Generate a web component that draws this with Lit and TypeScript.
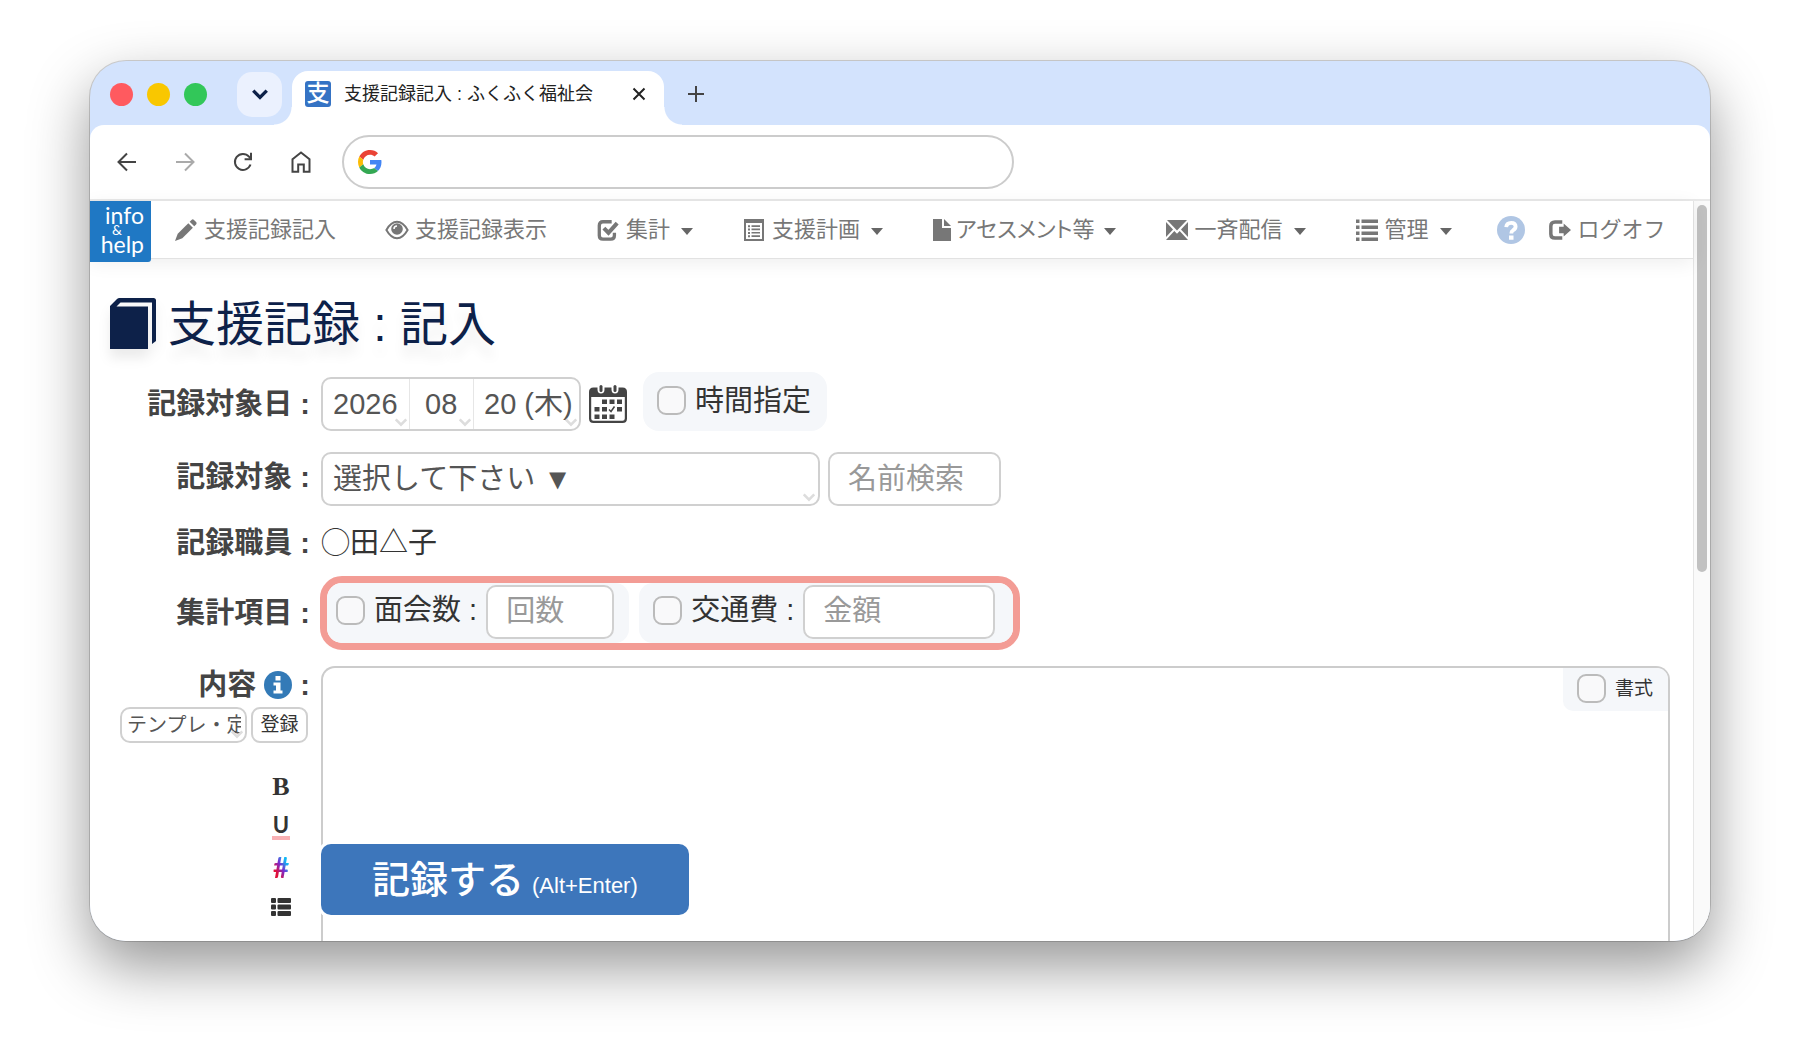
import { LitElement, html, css, svg, nothing } from "lit";
import { customElement, property } from "lit/decorators.js";

const icons: Record<string, { box: string; art: unknown }> = {
  back: { box: "0 0 20 20", art: svg`<path class="line" d="M19 10H2M10 1.500L1.500 10L10 18.500"/>` },
  forward: { box: "0 0 20 20", art: svg`<path class="line" d="M1 10H18M10 1.500L18.500 10L10 18.500"/>` },
  reload: {
    box: "0 0 20 20",
    art: svg`<path class="line" d="M17.500 12.500A8 8 0 1 1 16 4.700L18 7"/><path d="M19 .8V8.200H11.600V6.200H17V.8Z"/>`,
  },
  home: { box: "0 0 20 22", art: svg`<path class="line" d="M1.500 8.200L10 1.500L18.500 8.200V20.700H12.800V13.500H7.200V20.700H1.500Z"/>` },
  chevron: { box: "0 0 16 16", art: svg`<path class="heavy" d="M2 5L8 11L14 5"/>` },
  close: { box: "0 0 16 16", art: svg`<path class="line" d="M2.500 2.500L13.500 13.500M13.500 2.500L2.500 13.500"/>` },
  plus: { box: "0 0 16 16", art: svg`<path class="line" d="M8 0V16M0 8H16"/>` },
  google: {
    box: "0 0 48 48",
    art: svg`<path fill="#EA4335" d="M24 9.500c3.540 0 6.710 1.220 9.210 3.600l6.850-6.850C35.900 2.380 30.470 0 24 0 14.620 0 6.510 5.380 2.560 13.220l7.980 6.190C12.430 13.720 17.740 9.500 24 9.500z"/>
      <path fill="#4285F4" d="M46.980 24.550c0-1.570-.15-3.090-.38-4.550H24v9.020h12.940c-.58 2.960-2.260 5.480-4.780 7.180l7.730 6c4.510-4.180 7.090-10.360 7.090-17.650z"/>
      <path fill="#FBBC05" d="M10.530 28.590c-.48-1.450-.76-2.990-.76-4.590s.27-3.140.76-4.590l-7.980-6.190C.92 16.460 0 20.120 0 24c0 3.880.92 7.540 2.560 10.780l7.970-6.190z"/>
      <path fill="#34A853" d="M24 48c6.480 0 11.930-2.130 15.890-5.810l-7.730-6c-2.150 1.450-4.920 2.300-8.160 2.300-6.260 0-11.570-4.220-13.470-9.910l-7.980 6.190C6.510 42.620 14.620 48 24 48z"/>`,
  },
  pencil: {
    box: "0 0 24 24",
    art: svg`<path d="M0 24L3 16L14.500 4.500L19.500 9.500L8 21Z"/><path d="M16 3L18.300 .8Q19.500 -.2 20.700 1L23 3.300Q24.200 4.500 23.200 5.700L21 8Z"/>`,
  },
  eye: {
    box: "1 0 22 18",
    art: svg`<path class="line" d="M1.400 9Q6 .8 12 .8T22.600 9Q18 17.200 12 17.200T1.400 9Z"/><circle cx="12" cy="8" r="5.800"/><path d="M9 8A3 3 0 0 1 12 5" fill="none" stroke="#fff" stroke-width="1.500"/>`,
  },
  check: {
    box: "0 0 24 24",
    art: svg`<path d="M16 3H6.500Q2.500 3 2.500 7V18Q2.500 22 6.500 22H15Q19 22 19 18V15" fill="none" stroke="currentColor" stroke-width="3.600"/><path d="M7.500 10L12.500 15L22 4.500" fill="none" stroke="currentColor" stroke-width="4.400"/>`,
  },
  sheet: {
    box: "0 0 22 22",
    art: svg`<path fill-rule="evenodd" d="M1 0H21V22H1ZM3 4V20H19V4Z"/><path d="M5 6.300h2v2H5zM5 9.600h2v2H5zM5 12.900h2v2H5zM5 16.200h2v2H5zM8.500 6.300h8.500v1.700H8.500zM8.500 9.600h8.500v1.700H8.500zM8.500 12.900h8.500v1.700H8.500zM8.500 16.200h8.500v1.700H8.500z"/>`,
  },
  file: { box: "0 0 18 22", art: svg`<path d="M0 0H9V9H18V22H0Z"/><path d="M11 0L18 7H11Z"/>` },
  mail: {
    box: "0 0 22 20",
    art: svg`<path d="M1 0H21L11 10.500Z"/><path d="M0 2L7 9.500L0 17Z"/><path d="M22 2L15 9.500L22 17Z"/><path d="M0 20L8.300 11L11 13.700L13.700 11L22 20Z"/>`,
  },
  list: {
    box: "0 0 22 22",
    art: svg`<path d="M0 .5h3.500v3.500H0zM0 6.500h3.500v3.500H0zM0 12.500h3.500v3.500H0zM0 18.500h3.500v3.500H0z"/><path d="M5.500 .5H22v3.500H5.500zM5.500 6.500H22v3.500H5.500zM5.500 12.500H22v3.500H5.500zM5.500 18.500H22v3.500H5.500z"/>`,
  },
  logout: {
    box: "0 0 24 22",
    art: svg`<path d="M14.500 2.200H6.500Q2 2.200 2 6.700V15.300Q2 19.800 6.500 19.800H14.500" fill="none" stroke="currentColor" stroke-width="3.800"/><path d="M11 7.500H16V3.800L24 11L16 18.200V14.500H11Z"/>`,
  },
  question: {
    box: "0 0 28 28",
    art: svg`<circle cx="14" cy="14" r="14"/><path d="M9.200 11.200Q9.500 6.800 14.200 6.800Q18.600 6.800 18.600 10.600Q18.600 13 16 14.300Q14.300 15.300 14.300 17.500" fill="none" stroke="#fff" stroke-width="3.800"/><path fill="#fff" d="M12 19.500h4.500v4.200H12z"/>`,
  },
  info: {
    box: "0 0 28 28",
    art: svg`<circle cx="14" cy="14" r="14"/><path fill="#fff" d="M11.500 5h5v4.500h-5zM9.500 11.500h7v8h2v3h-9v-3h2.500v-5H9.500z"/>`,
  },
  book: {
    box: "0 0 46 51",
    art: svg`<path d="M0 51V8L7 1Q8 0 9.500 0H43.500Q46 0 46 2.500V43L42 46V4.500H10.500L6.500 8.500H38V51Z"/>`,
  },
  calendar: {
    box: "0 0 38 38",
    art: svg`<path fill-rule="evenodd" d="M4.500 2.500H8.500V4.500Q8.500 8.500 12 8.500T15.500 4.500V2.500H22.500V4.500Q22.500 8.500 26 8.500T29.500 4.500V2.500H33.500Q38 2.500 38 7V33.500Q38 38 33.500 38H4.500Q0 38 0 33.500V7Q0 2.500 4.500 2.500ZM2.200 12V33.500Q2.200 35.800 4.500 35.800H33.500Q35.800 35.800 35.800 33.500V12Z"/>
      <rect x="10.500" y="0" width="3" height="7" rx="1.500"/><rect x="24.500" y="0" width="3" height="7" rx="1.500"/>
      <path d="M13 14.500h5v4.500h-5zM20.500 14.500h5v4.500h-5zM28 14.500h5v4.500h-5zM5.500 22h5v4.500h-5zM13 22h5v4.500h-5zM28 22h5v4.500h-5zM5.500 29.500h5v4.500h-5zM13 29.500h5v4.500h-5zM20.500 29.500h5v4.500h-5z"/>
      <path d="M20 24.500L22 26.500L25.500 21.500" fill="none" stroke="currentColor" stroke-width="1.500"/>`,
  },
  bullets: {
    box: "0 0 20 18",
    art: svg`<rect x="0" y="0" width="5" height="5" rx="1"/><rect x="0" y="6.500" width="5" height="5" rx="1"/><rect x="0" y="13" width="5" height="5" rx="1"/><rect x="6.500" y="0" width="13.500" height="5" rx="1"/><rect x="6.500" y="6.500" width="13.500" height="5" rx="1"/><rect x="6.500" y="13" width="13.500" height="5" rx="1"/>`,
  },
};

@customElement("ui-icon")
export class UiIcon extends LitElement {
  @property() name = "plus";

  static styles = css`
    :host { display: inline-flex; flex: none; }
    svg { width: 100%; height: 100%; fill: currentColor; overflow: visible; }
    .line { fill: none; stroke: currentColor; stroke-width: 2; }
    .heavy { fill: none; stroke: currentColor; stroke-width: 3; }
  `;

  render() {
    const icon = icons[this.name];
    return html`<svg viewBox=${icon.box} aria-hidden="true">${icon.art}</svg>`;
  }
}

interface NavEntry { icon: string; text: string; menu?: boolean; tight?: boolean; }

const navEntries: NavEntry[] = [
  { icon: "pencil", text: "支援記録記入" },
  { icon: "eye", text: "支援記録表示" },
  { icon: "check", text: "集計", menu: true },
  { icon: "sheet", text: "支援計画", menu: true },
  { icon: "file", text: "アセスメント等", menu: true, tight: true },
  { icon: "mail", text: "一斉配信", menu: true },
  { icon: "list", text: "管理", menu: true },
];

@customElement("app-root")
export class AppRoot extends LitElement {
  static styles = css`
    * { box-sizing: border-box; }
    :host {
      display: flex;
      box-sizing: border-box;
      height: 100vh;
      padding: 61px 90px 119px;
      background: #fff;
      color: #333;
      font-family: "Liberation Sans", "Noto Sans CJK JP", sans-serif;
      font-size: 29px;
      line-height: 38px;
    }
    button, input, select, textarea { font: inherit; color: inherit; margin: 0; }
    button { border: 0; background: none; padding: 0; cursor: pointer; }
    a { color: inherit; text-decoration: none; }

    .window {
      flex: 1;
      min-width: 0;
      display: flex;
      flex-direction: column;
      overflow: hidden;
      border-radius: 36px;
      background: #d3e3fd;
      box-shadow: 0 0 0 1px rgba(0, 0, 0, 0.16), 0 25px 60px rgba(0, 0, 0, 0.42);
    }

    .tabs { flex: none; display: flex; align-items: center; height: 64px; padding: 2px 20px 0; }
    .lights { display: flex; gap: 14px; margin-right: 30px; }
    .light { width: 23px; height: 23px; border-radius: 50%; }
    .red { background: #ff5a5f; }
    .yellow { background: #f9c700; }
    .green { background: #32c759; }
    .tab-list {
      display: flex; align-items: center; justify-content: center;
      width: 45px; height: 45px; border-radius: 15px; background: #ebf1fe; color: #0d2149;
    }
    .tab-list ui-icon { width: 18px; height: 18px; }
    .tab {
      position: relative;
      align-self: flex-end;
      display: flex;
      align-items: center;
      width: 372px;
      height: 54px;
      margin-left: 10px;
      padding: 0 17px 8px 13px;
      border-radius: 16px 16px 0 0;
      background: #fff;
      color: #222;
    }
    .tab::before, .tab::after { content: ""; position: absolute; bottom: 0; width: 18px; height: 18px; }
    .tab::before { right: 100%; background: radial-gradient(circle at 0 0, transparent 17px, #fff 18px); }
    .tab::after { left: 100%; background: radial-gradient(circle at 100% 0, transparent 17px, #fff 18px); }
    .favicon {
      width: 26px; height: 26px; border-radius: 3px; background: #3573c4; color: #fff;
      font-size: 23px; line-height: 25px; font-weight: 500; text-align: center;
    }
    .tab-title { flex: 1; margin-left: 13px; font-size: 18px; line-height: 26px; white-space: nowrap; }
    .tab button, .new-tab { display: flex; }
    .tab ui-icon, .new-tab ui-icon { width: 16px; height: 16px; }
    .new-tab { margin-left: 24px; color: #444; }

    .toolbar {
      flex: none; display: flex; align-items: center; height: 74px; padding: 0 26px;
      border-radius: 14px 14px 0 0; background: #fff; color: #444;
    }
    .tool { display: flex; justify-content: center; width: 22px; margin-right: 36px; }
    .tool ui-icon { width: 20px; height: 22px; }
    .tool:disabled { color: #aaa; }
    .address {
      display: flex; align-items: center; width: 672px; height: 54px; margin-left: -6px; padding: 0 14px;
      border: 2px solid #ccc; border-radius: 27px; background: #fff;
    }
    .address ui-icon { width: 24px; height: 24px; }
    .address input { flex: 1; min-width: 0; border: 0; outline: 0; background: none; font-size: 20px; padding: 0 12px; }

    .viewport { flex: 1; min-height: 0; display: flex; border-top: 2px solid #e9e9e9; background: #fff; }
    .page { flex: 1; min-width: 0; display: flex; flex-direction: column; }
    .scroll { width: 17px; padding: 4px 3px; border-left: 1px solid #e6e6e6; background: #fafafa; }
    .thumb { height: 367px; border-radius: 5px; background: #c1c1c1; }

    .nav {
      flex: none; display: flex; align-items: center; height: 58px; position: relative;
      border-bottom: 1px solid #e2e2e2; box-shadow: 0 4px 18px rgba(0, 0, 0, 0.07);
      color: #777; font-size: 22px; line-height: 30px;
    }
    .logo {
      align-self: flex-start; flex: none; display: flex; flex-direction: column; align-items: flex-end;
      width: 61px; height: 61px; padding: 2px 7px 0 0; border-radius: 0 0 3px 0; background: #1f78c4; color: #fff;
      font-family: Lato, "Liberation Sans", sans-serif; font-size: 23px; line-height: 24px; font-weight: 400;
    }
    .logo .amp { width: 100%; padding-left: 22px; font-size: 14px; line-height: 5px; }
    .entries { display: flex; gap: 50px; margin-left: 24px; }
    .entry, .logoff { display: flex; align-items: center; gap: 7px; white-space: nowrap; }
    .entry ui-icon, .logoff ui-icon { width: 22px; height: 22px; }
    .tight { gap: 5px; font-feature-settings: "palt"; }
    .entry .file { width: 18px; }
    .caret { margin: 4px 0 0 4px; border: 6px solid transparent; border-top: 7px solid #666; border-bottom: 0; }
    .help { display: flex; margin: 0 24px 0 45px; color: #b0c6e4; }
    .help ui-icon { width: 28px; height: 28px; }

    .main { flex: 1; min-height: 0; display: flex; flex-direction: column; padding: 36px 23px 0 0; }
    .title {
      display: flex; align-items: center; gap: 12px; margin: 0 0 21px 20px; color: #0d2149;
      font-size: 48px; line-height: 56px; font-weight: 400; text-shadow: 0 12px 12px rgba(0, 0, 0, 0.08);
    }
    .title span { padding-top: 4px; line-height: 52px; }
    .title ui-icon { width: 46px; height: 51px; filter: drop-shadow(0 9px 6px rgba(0, 0, 0, 0.08)); }
    .form { flex: 1; min-height: 0; display: flex; flex-direction: column; gap: 16px; }
    .row { display: grid; grid-template-columns: 220px minmax(0, 1fr); column-gap: 11px; align-items: center; }
    .label { text-align: right; font-weight: 700; color: #444; white-space: nowrap; }
    .fields { display: flex; align-items: center; gap: 8px; }
    .date-row { padding-bottom: 5px; }
    .date-row .label { padding-top: 4px; }
    .date-row .fields { align-items: flex-end; }
    .target-row .label { padding-bottom: 4px; }
    .staff-row { padding-top: 4px; line-height: 34px; }

    .box { height: 54px; border: 2px solid #d0d0d0; border-radius: 10px; background: #fff; color: #555; }
    .dates { display: flex; overflow: hidden; width: 260px; }
    .pick { position: relative; display: flex; }
    .pick + .pick { border-left: 1px solid #e6e6e6; }
    .pick select { appearance: none; width: 100%; border: 0; outline: 0; background: none; padding: 0 0 0 10px; }
    .pick ui-icon { position: absolute; right: 1px; bottom: 0; width: 14px; height: 14px; color: #ddd; pointer-events: none; }
    .year { width: 86px; }
    .month { width: 64px; }
    .month select { padding-left: 15px; }
    .day { flex: 1; }
    .target { width: 499px; }
    .target ui-icon { right: 2px; }
    .text { padding: 0 18px; outline: 0; }
    .text::placeholder { color: #999; opacity: 1; }
    .search { width: 173px; }
    .calendar { display: flex; padding-bottom: 8px; color: #444; }
    .calendar ui-icon { width: 38px; height: 38px; }
    .chip { display: flex; align-items: center; gap: 9px; background: #f5f7fa; color: #333; white-space: nowrap; }
    .tick { appearance: none; flex: none; width: 29px; height: 29px; border: 2px solid #bbb; border-radius: 9px; background: #f9f9fa; }
    .time { height: 59px; margin-left: 8px; padding: 0 16px 2px 14px; border-radius: 16px; }

    .totals { display: flex; justify-self: start; gap: 10px; width: 700px; margin-left: -1px; border: 7px solid #f39c95; border-radius: 22px; overflow: hidden; }
    .totals .chip { height: 60px; border-radius: 14px; }
    .totals .chip:first-child { padding: 0 15px 3px 9px; }
    .totals .chip:last-child { flex: 1; padding: 0 0 3px 14px; border-radius: 14px 0 0 14px; }
    .totals label { padding-bottom: 4px; }
    .totals .tick { margin-bottom: 2px; }
    .count { width: 128px; }
    .amount { width: 192px; }

    .content-row { flex: 1; min-height: 0; align-items: stretch; }
    .side { display: flex; flex-direction: column; align-items: flex-end; }
    .side .label { display: flex; align-items: center; line-height: 34px; padding: 2px 0 5px; white-space: pre; }
    .side .label ui-icon { width: 28px; height: 28px; color: #337ab7; }
    .templates { display: flex; gap: 4px; padding-right: 2px; font-size: 20px; line-height: 26px; }
    .template { width: 127px; height: 36px; overflow: hidden; }
    .template select { padding: 0 4px 0 5px; }
    .register { width: 57px; height: 36px; border: 2px solid #d0d0d0; border-radius: 9px; font-size: 19px; }
    .marks { display: flex; flex-direction: column; align-items: center; gap: 13px; width: 30px; margin: 30px 14px 0 0; }
    .mark { display: flex; align-items: center; justify-content: center; height: 27px; font-size: 26px; line-height: 27px; color: #333; }
    .bold { font-family: "Liberation Serif", serif; font-weight: 700; }
    .under { padding: 0 1px; border-bottom: 4px solid #f9b0b3; font-family: Lato, sans-serif; font-size: 22px; line-height: 22px; font-weight: 700; }
    .hash { font-family: Lato, sans-serif; font-size: 28px; line-height: 24px; font-weight: 700; background: linear-gradient(60deg, #e0103a 25%, #7a2bd0 50%, #10b8f5 75%); background-clip: text; color: transparent; }
    .mark ui-icon { width: 20px; height: 18px; }

    .editor { position: relative; min-height: 0; display: flex; border: 2px solid #ccc; border-bottom: 0; border-radius: 14px 14px 0 0; }
    .editor textarea { flex: 1; resize: none; border: 0; outline: 0; background: none; padding: 8px 12px; }
    .format {
      position: absolute; top: 0; right: 0; height: 43px; padding: 0 15px 2px 14px;
      border-radius: 0 11px 0 10px; font-size: 19px; line-height: 26px;
    }
    .submit {
      position: absolute; left: -2px; bottom: 26px; height: 71px; padding: 6px 51px 0; border-radius: 10px;
      background: #3d76bb; box-shadow: 0 0 0 3px #fff; color: #fff; font-size: 38px; line-height: 48px; font-weight: 500; white-space: nowrap;
    }
    .submit small { margin-left: 8px; font-size: 22px; }
  `;

  private option(id: string, cls: string, label: string, text: string) {
    return html`<div class="pick ${cls}">
      <select id=${id} aria-label=${label}><option>${text}</option></select>
      <ui-icon name="chevron"></ui-icon>
    </div>`;
  }

  private navEntry(entry: NavEntry) {
    return html`<a class="entry ${entry.tight ? "tight" : ""}" href="#">
      <ui-icon class=${entry.icon} name=${entry.icon}></ui-icon>
      <span>${entry.text}</span>
      ${entry.menu ? html`<span class="caret"></span>` : nothing}
    </a>`;
  }

  render() {
    return html`
      <div class="window">
        <div class="tabs">
          <div class="lights">
            <span class="light red"></span><span class="light yellow"></span><span class="light green"></span>
          </div>
          <button class="tab-list" aria-label="タブ一覧"><ui-icon name="chevron"></ui-icon></button>
          <div class="tab">
            <span class="favicon">支</span>
            <span class="tab-title">支援記録記入 : ふくふく福祉会</span>
            <button aria-label="閉じる"><ui-icon name="close"></ui-icon></button>
          </div>
          <button class="new-tab" aria-label="新しいタブ"><ui-icon name="plus"></ui-icon></button>
        </div>

        <div class="toolbar">
          <button class="tool" aria-label="戻る"><ui-icon name="back"></ui-icon></button>
          <button class="tool" aria-label="進む" disabled><ui-icon name="forward"></ui-icon></button>
          <button class="tool" aria-label="再読み込み"><ui-icon name="reload"></ui-icon></button>
          <button class="tool" aria-label="ホーム"><ui-icon name="home"></ui-icon></button>
          <div class="address">
            <ui-icon name="google"></ui-icon>
            <input type="text" aria-label="アドレス" />
          </div>
        </div>

        <div class="viewport">
          <div class="page">
            <nav class="nav">
              <a class="logo" href="#"><span>info</span><span class="amp">&amp;</span><span>help</span></a>
              <div class="entries">${navEntries.map((entry) => this.navEntry(entry))}</div>
              <a class="help" href="#" aria-label="ヘルプ"><ui-icon name="question"></ui-icon></a>
              <a class="logoff" href="#"><ui-icon name="logout"></ui-icon><span>ログオフ</span></a>
            </nav>

            <main class="main">
              <h1 class="title"><ui-icon name="book"></ui-icon><span>支援記録 : 記入</span></h1>
              <form class="form">
                <div class="row date-row">
                  <label class="label" for="year">記録対象日 :</label>
                  <div class="fields">
                    <div class="box dates">
                      ${this.option("year", "year", "年", "2026")}
                      ${this.option("month", "month", "月", "08")}
                      ${this.option("day", "day", "日", "20 (木)")}
                    </div>
                    <button type="button" class="calendar" aria-label="カレンダー"><ui-icon name="calendar"></ui-icon></button>
                    <div class="chip time">
                      <input class="tick" type="checkbox" id="time" /><label for="time">時間指定</label>
                    </div>
                  </div>
                </div>

                <div class="row target-row">
                  <label class="label" for="target">記録対象 :</label>
                  <div class="fields">
                    ${this.option("target", "box target", "記録対象", "選択して下さい ▼")}
                    <input class="box text search" type="text" placeholder="名前検索" aria-label="名前検索" />
                  </div>
                </div>

                <div class="row staff-row">
                  <span class="label">記録職員 :</span>
                  <span>◯田△子</span>
                </div>

                <div class="row">
                  <span class="label">集計項目 :</span>
                  <div class="totals">
                    <div class="chip">
                      <input class="tick" type="checkbox" id="visits" /><label for="visits">面会数 :</label>
                      <input class="box text count" type="text" placeholder="回数" aria-label="回数" />
                    </div>
                    <div class="chip">
                      <input class="tick" type="checkbox" id="fare" /><label for="fare">交通費 :</label>
                      <input class="box text amount" type="text" placeholder="金額" aria-label="金額" />
                    </div>
                  </div>
                </div>

                <div class="row content-row">
                  <div class="side">
                    <label class="label" for="content">内容 <ui-icon name="info"></ui-icon> :</label>
                    <div class="templates">
                      ${this.option("template", "box template", "テンプレート", "テンプレ・定型文")}
                      <button type="button" class="register">登録</button>
                    </div>
                    <div class="marks">
                      <button type="button" class="mark bold">B</button>
                      <button type="button" class="mark under">U</button>
                      <button type="button" class="mark hash">#</button>
                      <button type="button" class="mark" aria-label="箇条書き"><ui-icon name="bullets"></ui-icon></button>
                    </div>
                  </div>
                  <div class="editor">
                    <textarea id="content"></textarea>
                    <div class="chip format">
                      <input class="tick" type="checkbox" id="format" /><label for="format">書式</label>
                    </div>
                    <button type="button" class="submit">記録する<small>(Alt+Enter)</small></button>
                  </div>
                </div>
              </form>
            </main>
          </div>
          <div class="scroll"><div class="thumb"></div></div>
        </div>
      </div>
    `;
  }
}
